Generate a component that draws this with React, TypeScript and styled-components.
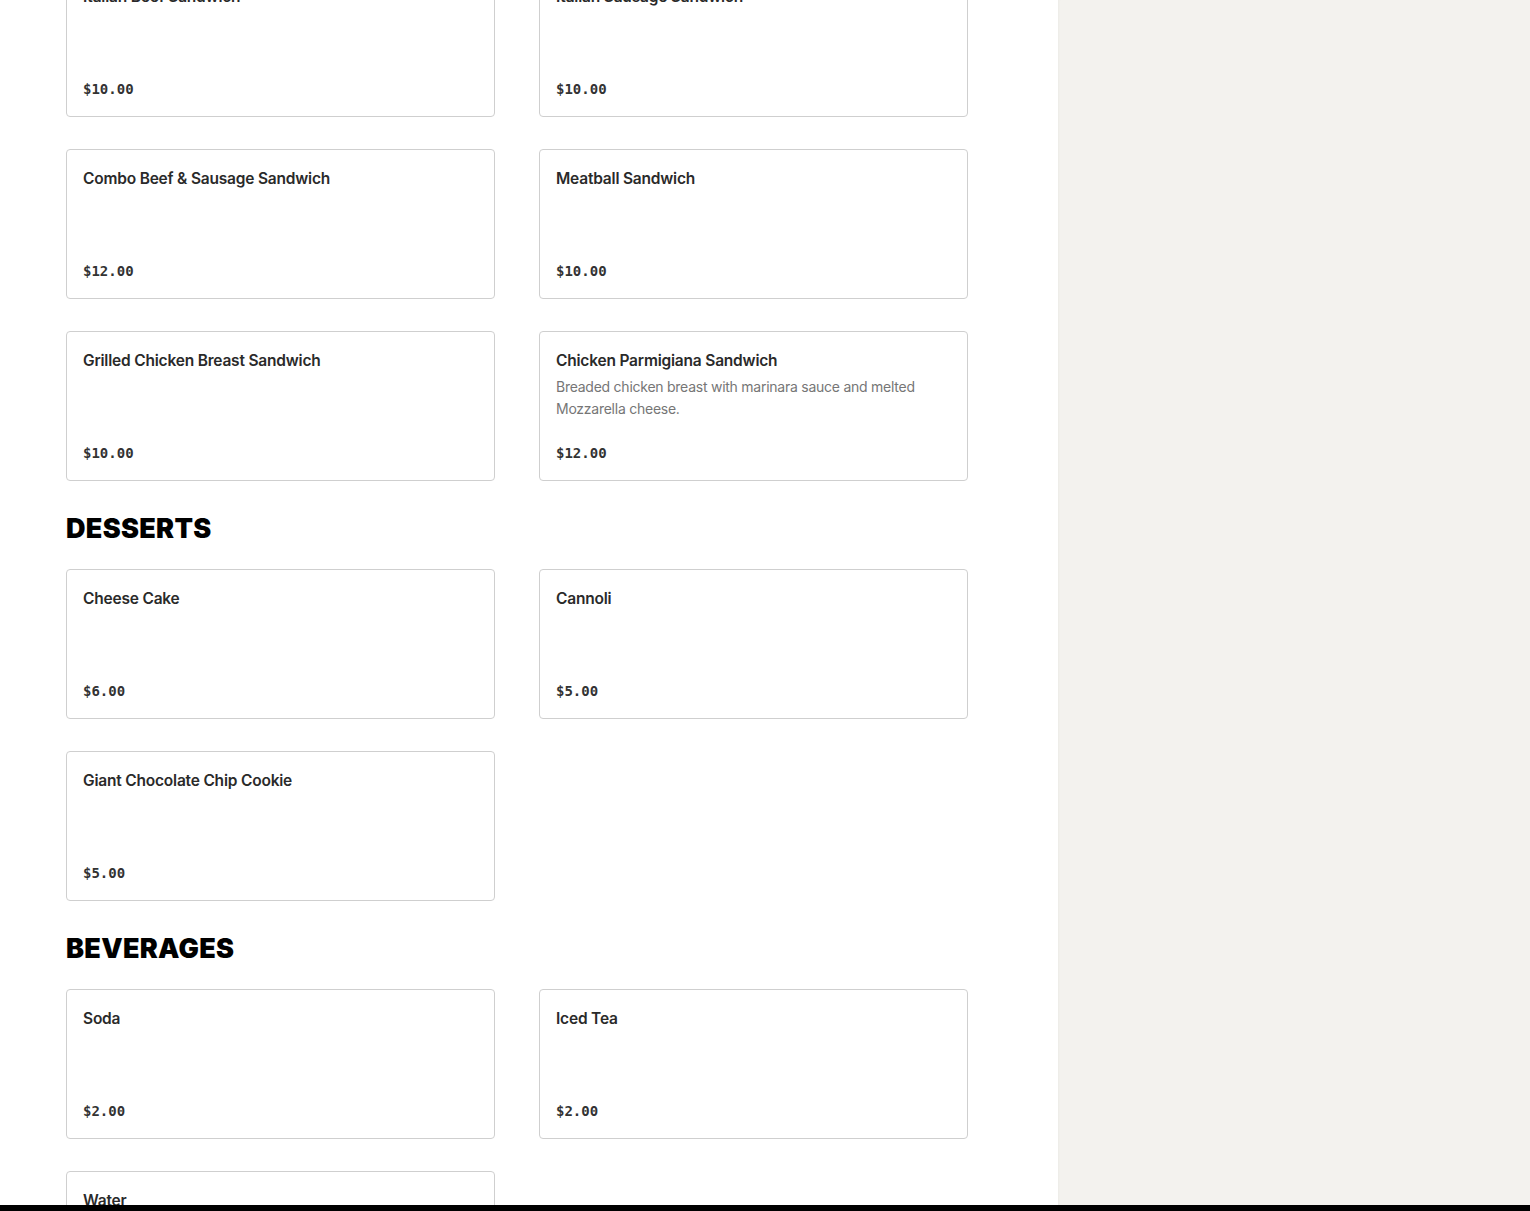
import React from "react";
import styled, { createGlobalStyle } from "styled-components";

const Global = createGlobalStyle`
  html, body {
    margin: 0;
    padding: 0;
    background: #fff;
    overflow: hidden;
  }
  body {
    font-family: Inter, "Noto Sans", sans-serif;
    color: #2a2a2a;
  }
`;

const Page = styled.div`
  display: flex;
  height: 1211px;
  overflow: hidden;
`;

const Main = styled.main`
  width: 1058px;
  flex: none;
  padding: 0 0 0 66px;
  box-sizing: border-box;
  background: #fff;
`;

const Aside = styled.aside`
  flex: 1;
  background: #f3f2ee;
  box-shadow: inset 2px 0 3px -2px rgba(0, 0, 0, 0.06);
`;

const Scroller = styled.div`
  margin-top: -33px;
  display: flex;
  flex-direction: column;
`;

const Section = styled.section`
  display: flex;
  flex-direction: column;
  & + & {
    margin-top: 32px;
  }
`;

const Heading = styled.h2`
  margin: 0 0 24px;
  font-family: Inter, "Noto Sans", sans-serif;
  font-weight: 900;
  font-size: 27px;
  line-height: 32px;
  letter-spacing: 0.3px;
  color: #000;
  text-transform: uppercase;
`;

const Grid = styled.div`
  display: grid;
  grid-template-columns: 429px 429px;
  column-gap: 44px;
  row-gap: 32px;
`;

const Card = styled.article`
  box-sizing: border-box;
  height: 150px;
  border: 1px solid #cfcfcf;
  border-radius: 4px;
  padding: 17px 16px 16px;
  display: flex;
  flex-direction: column;
  background: #fff;
`;

const Title = styled.h3`
  margin: 0;
  font-size: 15.5px;
  line-height: 24px;
  font-weight: 600;
  letter-spacing: -0.2px;
  color: #2a2a2a;
`;

const Desc = styled.p`
  margin: 3px 0 0;
  font-size: 14px;
  line-height: 22px;
  letter-spacing: -0.25px;
  color: #767676;
`;

const Price = styled.span`
  margin-top: auto;
  font-family: "DejaVu Sans Mono", "Liberation Mono", monospace;
  font-size: 14px;
  line-height: 22px;
  font-weight: 700;
  color: #333;
`;

const BottomBar = styled.div`
  position: fixed;
  left: 0;
  right: 0;
  bottom: 0;
  height: 6px;
  background: #000;
`;

type Item = { name: string; price: string; desc?: string };

const sandwiches: Item[] = [
  { name: "Italian Beef Sandwich", price: "$10.00" },
  { name: "Italian Sausage Sandwich", price: "$10.00" },
  { name: "Combo Beef & Sausage Sandwich", price: "$12.00" },
  { name: "Meatball Sandwich", price: "$10.00" },
  { name: "Grilled Chicken Breast Sandwich", price: "$10.00" },
  {
    name: "Chicken Parmigiana Sandwich",
    price: "$12.00",
    desc: "Breaded chicken breast with marinara sauce and melted Mozzarella cheese.",
  },
];

const desserts: Item[] = [
  { name: "Cheese Cake", price: "$6.00" },
  { name: "Cannoli", price: "$5.00" },
  { name: "Giant Chocolate Chip Cookie", price: "$5.00" },
];

const beverages: Item[] = [
  { name: "Soda", price: "$2.00" },
  { name: "Iced Tea", price: "$2.00" },
  { name: "Water", price: "$2.00" },
];

function Cards({ items }: { items: Item[] }) {
  return (
    <Grid>
      {items.map((it) => (
        <Card key={it.name}>
          <Title>{it.name}</Title>
          {it.desc && <Desc>{it.desc}</Desc>}
          <Price>{it.price}</Price>
        </Card>
      ))}
    </Grid>
  );
}

export default function App() {
  return (
    <>
      <Global />
      <Page>
        <Main>
          <Scroller>
            <Section>
              <Cards items={sandwiches} />
            </Section>
            <Section>
              <Heading>Desserts</Heading>
              <Cards items={desserts} />
            </Section>
            <Section>
              <Heading>Beverages</Heading>
              <Cards items={beverages} />
            </Section>
          </Scroller>
        </Main>
        <Aside />
      </Page>
      <BottomBar />
    </>
  );
}
